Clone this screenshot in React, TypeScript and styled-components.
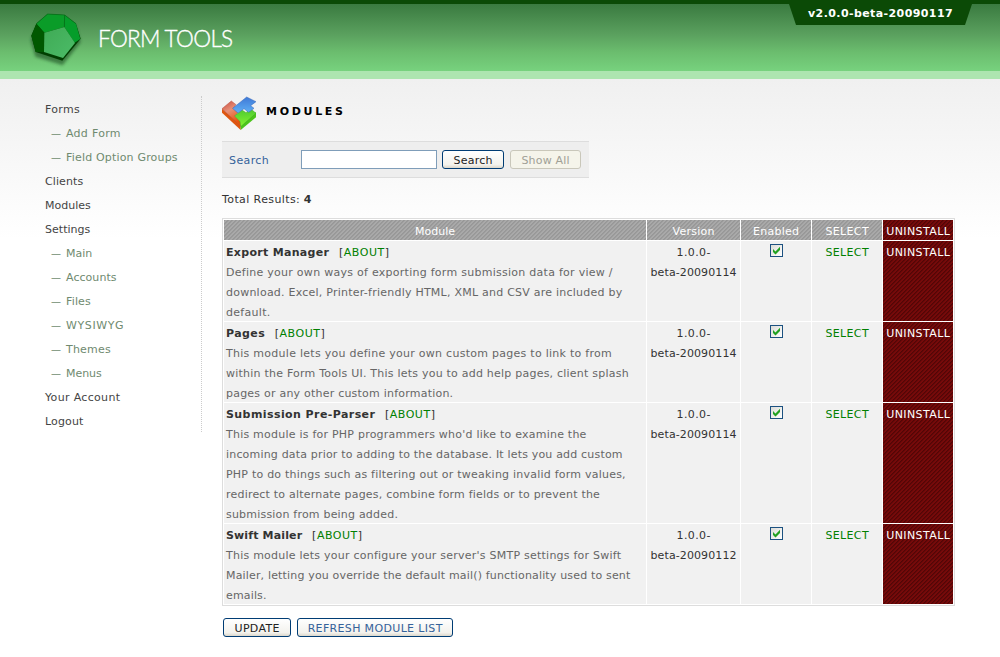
import React from "react";
import styled, { createGlobalStyle, css } from "styled-components";

const GlobalStyle = createGlobalStyle`
  * { box-sizing: border-box; }
  body {
    margin: 0;
    background: #fff;
    color: #333;
    font-family: "DejaVu Sans", Verdana, sans-serif;
    font-size: 11px;
    line-height: 20px;
  }
`;

const Text = styled.span<{ $ls: number }>`
  letter-spacing: ${(p) => p.$ls}px;
  margin-right: ${(p) => -p.$ls}px;
  white-space: pre;
`;

const Page = styled.div`
  min-height: 657px;
  background: linear-gradient(#f0f0f0, #fff) 0 79px / 100% 160px no-repeat;
`;

const Header = styled.header`
  display: flex;
  justify-content: space-between;
  align-items: flex-start;
  height: 79px;
  padding-right: 28px;
  border-top: 4px solid #0b4a06;
  border-bottom: 8px solid #ade5b0;
  background: linear-gradient(#3a7a40, #5aa05e 45%, #6bbd6e 72%, #77d27e);
`;

const Brand = styled.div`
  display: flex;
  align-items: flex-start;
  padding-left: 24px;
`;

const BrandName = styled.div`
  margin: 19px 0 0 8px;
  color: #fff;
  font: 300 22.5px/32px Lato, sans-serif;
  letter-spacing: -0.65px;
  -webkit-text-stroke: 0.35px #fff;
`;

const VersionTab = styled.div`
  width: 183px;
  height: 21px;
  padding-left: 19px;
  background: #0b4a06;
  clip-path: polygon(0 0, 100% 0, 176px 100%, 7px 100%);
  color: #fff;
  font-weight: bold;
  line-height: 19px;
`;

const Body = styled.div`
  display: flex;
  align-items: flex-start;
  padding: 17px 0 0 45px;
`;

const Nav = styled.nav`
  width: 157px;
  border-right: 1px dotted #ccc;
`;

const NavItem = styled.a<{ $sub?: boolean }>`
  display: flex;
  height: 24px;
  line-height: 27px;
  color: #444;
  ${(p) =>
    p.$sub &&
    css`
      padding-left: 6px;
      color: #6f8a6f;
    `}
`;

const Dash = styled.span`
  width: 15px;
  font-size: 10px;
`;

const Main = styled.main`
  width: 733px;
  margin-left: 20px;
`;

const TitleRow = styled.div`
  display: flex;
  height: 45px;
`;

const Title = styled.h1`
  margin: 6px 0 0 6px;
  color: #000;
  font-size: 11px;
  line-height: 20px;
`;

const SearchBar = styled.form`
  display: flex;
  align-items: center;
  width: 367px;
  height: 37px;
  padding-left: 7px;
  border: solid #ddd;
  border-width: 1px 0;
  background: #eee;
`;

const SearchLabel = styled.label`
  width: 72px;
  padding-top: 2px;
  color: #35629a;
`;

const SearchInput = styled.input`
  width: 136px;
  height: 19px;
  margin: 0 5px 0 0;
  padding: 0 3px;
  border: 1px solid #7f9db9;
  background: #fff;
`;

const Button = styled.button<{ $w: number; $link?: boolean }>`
  width: ${(p) => p.$w}px;
  height: 19px;
  margin: 0 6px 0 0;
  padding: 1px 0 0;
  border: 1px solid #003c74;
  border-radius: 3px;
  background: linear-gradient(#fff, #f3f2ed 80%, #dcd7cb);
  color: ${(p) => (p.$link ? "#35629a" : "#222")};
  font: 11px/17px "DejaVu Sans", Verdana, sans-serif;
  text-align: center;
  &:disabled {
    border-color: #c9c7ba;
    background: #f5f4ea;
    color: #a0a096;
  }
`;

const Total = styled.p`
  height: 20px;
  margin: 11px 0 9px;
  line-height: 22px;
`;

const Table = styled.div`
  display: grid;
  grid-template-columns: 422px 93px 70px 70px 70px;
  gap: 1px;
  padding: 1px;
  border: 1px solid #ddd;
  background: #fff;
`;

const greyStripes = css`
  background: repeating-linear-gradient(135deg, #979797 0 0.6px, #a9a9a9 1.1px 2.828px);
`;

const redStripes = css`
  background: repeating-linear-gradient(135deg, #520606 0 0.5px, #760a0a 1px 2.828px);
`;

const HeadCell = styled.div<{ $red?: boolean }>`
  height: 20px;
  line-height: 23px;
  color: #fff;
  text-align: center;
  white-space: nowrap;
  ${(p) => (p.$red ? redStripes : greyStripes)}
`;

const Cell = styled.div<{ $kind?: "module" | "select" | "uninstall" }>`
  display: flex;
  flex-direction: column;
  align-items: center;
  background: #f1f1f1;
  ${(p) => p.$kind === "module" && css`align-items: flex-start; padding-left: 2px; color: #666;`}
  ${(p) => p.$kind === "select" && css`color: #008000;`}
  ${(p) => p.$kind === "uninstall" && css`color: #fff; ${redStripes}`}
`;

const Line = styled.div`
  height: 20px;
  line-height: 23px;
`;

const NameLine = styled(Line)`
  display: flex;
  gap: 10px;
  color: #333;
`;

const About = styled.span`
  color: #008000;
`;

const Check = styled.span`
  display: flex;
  width: 13px;
  height: 13px;
  margin-top: 3px;
  margin-left: 1px;
  border: 1px solid #1c5180;
  background: linear-gradient(135deg, #dcdcd7, #fff);
`;

const Actions = styled.div`
  display: flex;
  padding: 12px 0 0 1px;
`;

const Logo = () => (
  <svg width="66" height="67" viewBox="0 0 198 201">
    <defs>
      <linearGradient id="face" x1="0" y1="0" x2="1" y2="1">
        <stop offset="0" stopColor="#3faa55" />
        <stop offset="1" stopColor="#4cbc68" />
      </linearGradient>
      <filter id="soft" x="-20%" y="-20%" width="140%" height="150%">
        <feGaussianBlur stdDeviation="5" />
      </filter>
    </defs>
    <g transform="translate(0 12)">
      <path d="M72 26 122 30 156 54 170 102 116 172 34 146 20 96 36 58Z" fill="#1c4d20" opacity=".6" filter="url(#soft)" />
      <path d="M71 18 122 21 156 47 170 92 115 158 35 132 22 83 37 47Z" fill="#003f00" />
      <path d="M71 18 122 21 121 57 61 74 37 47Z" fill="#0a9c28" />
      <path d="M122 21 156 47 169 93 152 104 121 57Z" fill="#059d2a" />
      <path d="M22 83 37 47 61 74 60 132 35 132Z" fill="#005800" />
      <path d="M61 74 121 57 153 105 117 150 60 132Z" fill="url(#face)" />
      <path d="M71 18 122 21 156 47M122 21 121 57M37 47 71 18" fill="none" stroke="#067018" strokeWidth="2" />
    </g>
  </svg>
);

const ModulesIcon = () => (
  <svg width="38" height="36" viewBox="12 12 114 108">
    <defs>
      <linearGradient id="red" x1="0" y1="0" x2="0.4" y2="1">
        <stop offset="0" stopColor="#c6483c" />
        <stop offset=".45" stopColor="#e79078" />
        <stop offset="1" stopColor="#ea5208" />
      </linearGradient>
      <linearGradient id="green" x1="0" y1="0" x2="0" y2="1">
        <stop offset="0" stopColor="#4cc832" />
        <stop offset="1" stopColor="#86f52e" />
      </linearGradient>
      <linearGradient id="blue" x1="0" y1="0" x2="0" y2="1">
        <stop offset="0" stopColor="#3f78d6" />
        <stop offset="1" stopColor="#5fb0f6" />
      </linearGradient>
    </defs>
    <path d="M12 50V62L68 114V100Z" fill="#de560f" />
    <path d="M68 98V114L114 76V60Z" fill="#4cc41c" />
    <path d="M12 50 40 27 54 38 44 50 60 62 50 72 68 90V102Z" fill="url(#red)" stroke="#b64a38" strokeWidth="1.5" />
    <path d="M68 104 114 64 98 50 84 62 72 54 50 72 66 88Z" fill="url(#green)" stroke="#3aa81e" strokeWidth="1.5" />
    <path d="M44 49 86 15 114 29 98 41 108 49 92 61 78 50 60 63Z" fill="url(#blue)" stroke="#3867b8" strokeWidth="1.5" />
  </svg>
);

const navItems: { label: string; ls: number; sub?: boolean }[] = [
  { label: "Forms", ls: 0.32 },
  { label: "Add Form", ls: 0.28, sub: true },
  { label: "Field Option Groups", ls: 0.18, sub: true },
  { label: "Clients", ls: 0.1 },
  { label: "Modules", ls: 0 },
  { label: "Settings", ls: 0.03 },
  { label: "Main", ls: -0.05, sub: true },
  { label: "Accounts", ls: 0.05, sub: true },
  { label: "Files", ls: 0.15, sub: true },
  { label: "WYSIWYG", ls: 0.6, sub: true },
  { label: "Themes", ls: 0.2, sub: true },
  { label: "Menus", ls: -0.05, sub: true },
  { label: "Your Account", ls: 0.33 },
  { label: "Logout", ls: 0.13 },
];

type Row = { name: string; ls: number; build: string; lines: [string, number][] };

const rows: Row[] = [
  {
    name: "Export Manager", ls: 0.31, build: "beta-20090114",
    lines: [
      ["Define your own ways of exporting form submission data for view /", 0.27],
      ["download. Excel, Printer-friendly HTML, XML and CSV are included by", 0.235],
      ["default.", 0.3],
    ],
  },
  {
    name: "Pages", ls: 0.42, build: "beta-20090114",
    lines: [
      ["This module lets you define your own custom pages to link to from", 0.27],
      ["within the Form Tools UI. This lets you to add help pages, client splash", 0.225],
      ["pages or any other custom information.", 0.22],
    ],
  },
  {
    name: "Submission Pre-Parser", ls: 0.42, build: "beta-20090114",
    lines: [
      ["This module is for PHP programmers who'd like to examine the", 0.23],
      ["incoming data prior to adding to the database. It lets you add custom", 0.18],
      ["PHP to do things such as filtering out or tweaking invalid form values,", 0.225],
      ["redirect to alternate pages, combine form fields or to prevent the", 0.205],
      ["submission from being added.", 0.2],
    ],
  },
  {
    name: "Swift Mailer", ls: 0.14, build: "beta-20090112",
    lines: [
      ["This module lets your configure your server's SMTP settings for Swift", 0.234],
      ["Mailer, letting you override the default mail() functionality used to sent", 0.165],
      ["emails.", 0.156],
    ],
  },
];

export default function App() {
  return (
    <Page>
      <GlobalStyle />
      <Header>
        <Brand>
          <Logo />
          <BrandName>FORM TOOLS</BrandName>
        </Brand>
        <VersionTab>
          <Text $ls={0.41}>v2.0.0-beta-20090117</Text>
        </VersionTab>
      </Header>
      <Body>
        <Nav>
          {navItems.map((item) => (
            <NavItem key={item.label} $sub={item.sub}>
              {item.sub && <Dash>—</Dash>}
              <Text $ls={item.ls}>{item.label}</Text>
            </NavItem>
          ))}
        </Nav>
        <Main>
          <TitleRow>
            <ModulesIcon />
            <Title>
              <Text $ls={2.7}>MODULES</Text>
            </Title>
          </TitleRow>
          <SearchBar>
            <SearchLabel><Text $ls={0.4}>Search</Text></SearchLabel>
            <SearchInput />
            <Button type="button" $w={62}><Text $ls={0.24}>Search</Text></Button>
            <Button type="button" $w={71} disabled><Text $ls={0.2}>Show All</Text></Button>
          </SearchBar>
          <Total>
            <Text $ls={0.4}>Total Results: </Text><b>4</b>
          </Total>
          <Table>
            <HeadCell><Text $ls={0}>Module</Text></HeadCell>
            <HeadCell><Text $ls={0.25}>Version</Text></HeadCell>
            <HeadCell><Text $ls={0.25}>Enabled</Text></HeadCell>
            <HeadCell><Text $ls={0.36}>SELECT</Text></HeadCell>
            <HeadCell $red><Text $ls={0.4}>UNINSTALL</Text></HeadCell>
            {rows.map((row) => (
              <React.Fragment key={row.name}>
                <Cell $kind="module">
                  <NameLine>
                    <b><Text $ls={row.ls}>{row.name}</Text></b>
                    <Text $ls={0.52}>[<About>ABOUT</About>]</Text>
                  </NameLine>
                  {row.lines.map(([text, ls]) => (
                    <Line key={text}><Text $ls={ls}>{text}</Text></Line>
                  ))}
                </Cell>
                <Cell>
                  <Line><Text $ls={0.4}>1.0.0-</Text></Line>
                  <Line><Text $ls={0.1}>{row.build}</Text></Line>
                </Cell>
                <Cell>
                  <Check>
                    <svg width="11" height="11" viewBox="0 0 11 11">
                      <path d="M2 4 4.5 6.4 9 1.8V5L4.5 9.4 2 7Z" fill="#21a121" />
                    </svg>
                  </Check>
                </Cell>
                <Cell $kind="select">
                  <Line><Text $ls={0.36}>SELECT</Text></Line>
                </Cell>
                <Cell $kind="uninstall">
                  <Line><Text $ls={0.4}>UNINSTALL</Text></Line>
                </Cell>
              </React.Fragment>
            ))}
          </Table>
          <Actions>
            <Button type="button" $w={68}><Text $ls={0.33}>UPDATE</Text></Button>
            <Button type="button" $w={156} $link><Text $ls={0.34}>REFRESH MODULE LIST</Text></Button>
          </Actions>
        </Main>
      </Body>
    </Page>
  );
}
